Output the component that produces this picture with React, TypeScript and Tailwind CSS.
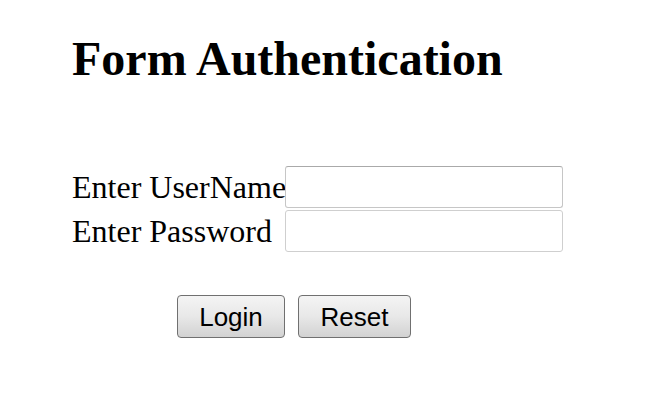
export default function App() {
  return (
    <div className="w-[650px] h-[400px] bg-white pl-[72px] pt-[35px] text-black font-['Liberation_Serif','Times_New_Roman',serif]">
      {/* Heading */}
      <h1 className="text-[48px] font-bold leading-none">Form Authentication</h1>

      {/* Credentials table */}
      <div className="mt-[83px] grid grid-cols-[213px_278px] grid-rows-[42px_42px] gap-y-[2px] text-[32px]">
        <label className="flex items-center leading-none whitespace-nowrap">Enter UserName</label>
        <input type="text" className="border border-[#c6c6c6] border-t-[#aaaaaa] rounded-[3px] bg-white outline-none" />
        <label className="flex items-center leading-none whitespace-nowrap">Enter Password</label>
        <input type="password" className="border border-[#cfcfcf] rounded-[3px] bg-white outline-none" />
      </div>

      {/* Buttons */}
      <div className="mt-[43px] ml-[105px] flex gap-[13px] font-['Liberation_Sans',Arial,sans-serif] text-[26px]">
        <button className="w-[108px] h-[43px] border border-[#707070] rounded-[4px] bg-gradient-to-b from-[#f4f4f4] via-[#e8e8e8] to-[#d2d2d2] leading-none">
          Login
        </button>
        <button className="w-[113px] h-[43px] border border-[#707070] rounded-[4px] bg-gradient-to-b from-[#f4f4f4] via-[#e8e8e8] to-[#d2d2d2] leading-none">
          Reset
        </button>
      </div>
    </div>
  );
}
